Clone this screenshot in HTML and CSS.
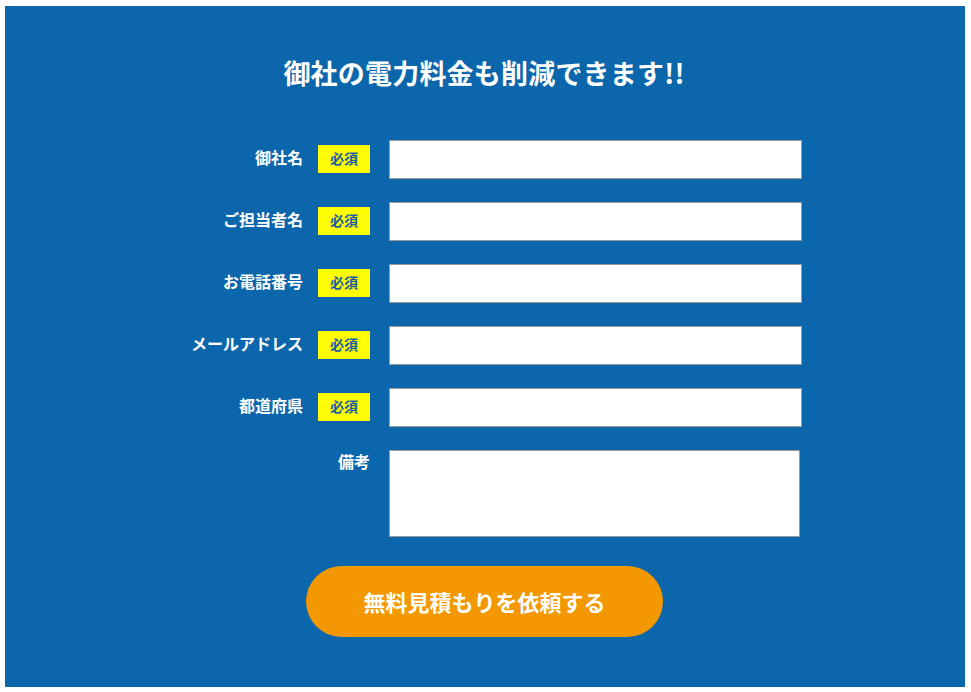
FILE: index.html
```html
<!DOCTYPE html>
<html lang="ja">
<head>
<meta charset="utf-8">
<link rel="stylesheet" href="styles.css">
</head>
<body>
<div class="page">
  <section class="panel">
    <h2 class="title">御社の電力料金も削減できます!!</h2>
    <form class="form">
      <div class="row">
        <label class="label">御社名</label>
        <span class="badge">必須</span>
        <input class="field" type="text">
      </div>
      <div class="row">
        <label class="label">ご担当者名</label>
        <span class="badge">必須</span>
        <input class="field" type="text">
      </div>
      <div class="row">
        <label class="label">お電話番号</label>
        <span class="badge">必須</span>
        <input class="field" type="text">
      </div>
      <div class="row">
        <label class="label">メールアドレス</label>
        <span class="badge">必須</span>
        <input class="field" type="text">
      </div>
      <div class="row">
        <label class="label">都道府県</label>
        <span class="badge">必須</span>
        <input class="field" type="text">
      </div>
      <div class="row row-note">
        <label class="label label-note">備考</label>
        <textarea class="note"></textarea>
      </div>
      <div class="actions">
        <button type="button" class="submit">無料見積もりを依頼する</button>
      </div>
    </form>
  </section>
</div>
</body>
</html>
```

FILE: styles.css
```css
* { box-sizing: border-box; }
html, body { margin: 0; padding: 0; background: #ffffff; }
body {
  font-family: "Noto Sans CJK JP", "Noto Sans", sans-serif;
  color: #ffffff;
}
.page {
  padding: 6px 6px 5px 5px;
}
.panel {
  background: #0c66ab;
  width: 960px;
  padding: 47px 0 50px;
}
.title {
  margin: 0;
  text-align: center;
  font-size: 27px;
  line-height: 40px;
  font-weight: 700;
  letter-spacing: 0.2px;
  padding-right: 2px;
}
.form {
  margin: 47px 0 0;
  display: flex;
  flex-direction: column;
  gap: 23px;
}
.row {
  display: flex;
  align-items: center;
  height: 39px;
}
.label {
  width: 298px;
  text-align: right;
  font-size: 16px;
  font-weight: 700;
  line-height: 20px;
  margin-right: 15px;
  margin-bottom: 5px;
}
.badge {
  width: 52px;
  height: 28px;
  background: #ffff00;
  color: #1a5fa3;
  font-size: 14px;
  font-weight: 700;
  line-height: 27px;
  text-align: center;
  margin-right: 19px;
  margin-bottom: 1px;
}
.field {
  width: 413px;
  height: 39px;
  border: 1px solid #9a9a9a;
  background: #ffffff;
  margin: 0;
  padding: 0 8px;
}
.row-note {
  height: 87px;
  align-items: flex-start;
}
.label-note {
  width: 365px;
  margin-right: 19px;
  padding-top: 1px;
}
.note {
  width: 411px;
  height: 87px;
  border: 1px solid #9a9a9a;
  background: #ffffff;
  margin: 0;
  resize: none;
  display: block;
}
.actions {
  display: flex;
  justify-content: center;
  margin-top: 6px;
}
.submit {
  width: 357px;
  height: 71px;
  border: none;
  border-radius: 36px;
  background: #f39800;
  color: #ffffff;
  font-family: "Noto Sans CJK JP", "Noto Sans", sans-serif;
  font-size: 22px;
  font-weight: 700;
  margin-left: -1px;
  padding-bottom: 2px;
}
```
